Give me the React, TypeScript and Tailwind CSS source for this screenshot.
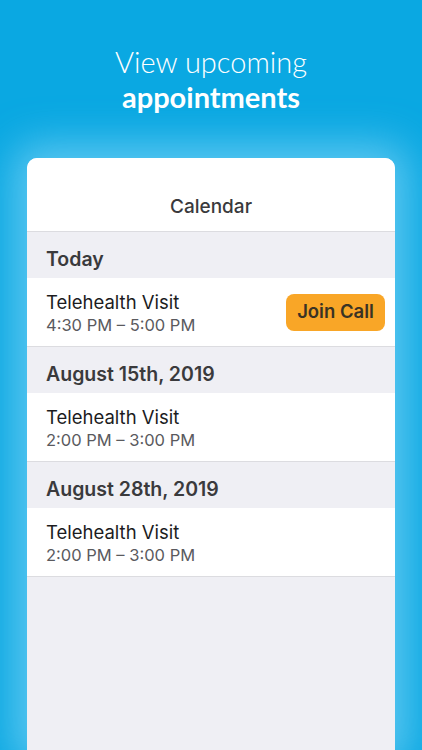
import React from "react";

type Appt = { title: string; time: string; join?: boolean };
type Section = { label: string; items: Appt[] };

const sections: Section[] = [
    { label: "Today", items: [{ title: "Telehealth Visit", time: "4:30 PM – 5:00 PM", join: true }] },
    { label: "August 15th, 2019", items: [{ title: "Telehealth Visit", time: "2:00 PM – 3:00 PM" }] },
    { label: "August 28th, 2019", items: [{ title: "Telehealth Visit", time: "2:00 PM – 3:00 PM" }] },
];

const Row = ({ title, time, join }: Appt) => (
    <div className="flex items-center justify-between bg-white h-[69px] pl-[19px] pr-[10px] border-b border-[#dcdce0]">
        <div className="flex flex-col pt-[1px]">
            <span className="text-[18.5px] leading-[24px] text-[#1c1c1e]">{title}</span>
            <span className="text-[16.5px] leading-[22px] text-[#5a5a5e]">{time}</span>
        </div>
        {join && (
            <button className="h-[37px] w-[99px] rounded-[8px] bg-[#f9a627] text-[18.5px] font-semibold text-[#3a3324]">
                Join Call
            </button>
        )}
    </div>
);

export default function App() {
    return (
        <div className="h-[750px] w-full overflow-hidden bg-[#0aa8e2] flex flex-col items-center" style={{ fontFamily: "Inter, 'Noto Sans', sans-serif" }}>
            <div className="pt-[44px] text-center text-white" style={{ fontFamily: "Lato, 'Noto Sans', sans-serif" }}>
                <div className="text-[29px] font-light leading-[36px]">View upcoming</div>
                <div className="text-[29px] font-bold leading-[34px]">appointments</div>
            </div>
            <div className="mt-[44px] w-[368px] flex-1 rounded-t-[10px] bg-[#efeff4] overflow-hidden shadow-[0_0_40px_14px_rgba(120,210,245,0.75)]">
                <div className="h-[74px] bg-white border-b border-[#dcdce0] flex items-end justify-center pb-[10px]">
                    <span className="text-[19px] font-medium text-[#3a3a3c]">Calendar</span>
                </div>
                {sections.map((s) => (
                    <div key={s.label}>
                        <div className="h-[46px] flex items-end pl-[19px] pb-[4px]">
                            <span className="text-[19.5px] font-semibold text-[#3a3a3c]">{s.label}</span>
                        </div>
                        {s.items.map((a, i) => (
                            <Row key={i} {...a} />
                        ))}
                    </div>
                ))}
            </div>
        </div>
    );
}
